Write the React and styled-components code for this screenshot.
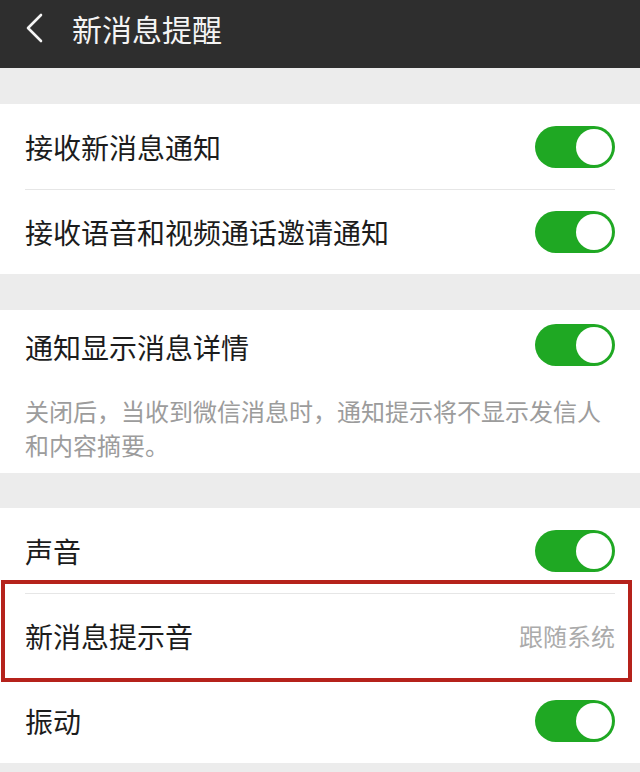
import React from "react";
import styled, { createGlobalStyle } from "styled-components";

const GlobalStyle = createGlobalStyle`
  html, body {
    margin: 0;
    padding: 0;
    background: #ececec;
  }
  body {
    font-family: "Noto Sans CJK SC", "Noto Sans", sans-serif;
    -webkit-font-smoothing: antialiased;
  }
`;

const Page = styled.div`
  width: 640px;
  height: 772px;
  overflow: hidden;
  background: #ececec;
  display: flex;
  flex-direction: column;
`;

const Header = styled.header`
  height: 68px;
  box-sizing: border-box;
  padding: 0 0 13px 25px;
  background: #2e2e2e;
  display: flex;
  align-items: center;
  gap: 29px;
  flex-shrink: 0;
`;

const BackIcon = styled.svg`
  width: 18px;
  height: 30px;
  display: block;
`;

const Title = styled.h1`
  margin: 0;
  font-size: 30px;
  font-weight: 400;
  color: #f4f4f4;
  line-height: 1;
  letter-spacing: 0;
`;

const Section = styled.section`
  background: #fff;
  margin-top: ${(p) => p.$gap}px;
  flex-shrink: 0;
`;

const Row = styled.div`
  position: relative;
  padding: 0 25px;
`;

const RowInner = styled.div`
  height: ${(p) => (p.$divider ? p.$h - 1 : p.$h)}px;
  border-top: ${(p) => (p.$divider ? "1px solid #e6e6e6" : "none")};
  display: flex;
  align-items: center;
  justify-content: space-between;
`;

const Label = styled.span`
  font-size: 28px;
  color: #1c1c1c;
  line-height: 1;
  padding-top: ${(p) => p.$shift || 0}px;
`;

const Value = styled.span`
  font-size: 24px;
  color: #ababab;
  line-height: 1;
`;

const Toggle = styled.div`
  width: 80px;
  height: 42px;
  border-radius: 21px;
  background: #1fa823;
  position: relative;
  flex-shrink: 0;
`;

const Knob = styled.div`
  position: absolute;
  top: 3px;
  right: 3px;
  width: 36px;
  height: 36px;
  border-radius: 50%;
  background: #fff;
`;

const Note = styled.p`
  margin: 0;
  padding: 14px 25px 11px;
  font-size: 24px;
  line-height: 34px;
  color: #9c9c9c;
`;

const Highlight = styled.div`
  position: absolute;
  top: -13px;
  bottom: -4px;
  left: 1px;
  right: 8px;
  border: 4px solid #b5221b;
  pointer-events: none;
`;

const Switch = () => (
  <Toggle>
    <Knob />
  </Toggle>
);

const Item = ({ label, divider, toggle, value, h = 85, highlight, shift }) => (
  <Row>
    <RowInner $divider={divider} $h={h}>
      <Label $shift={shift}>{label}</Label>
      {toggle && <Switch />}
      {value && <Value>{value}</Value>}
    </RowInner>
    {highlight && <Highlight />}
  </Row>
);

export default function App() {
  return (
    <>
      <GlobalStyle />
      <Page>
        <Header>
          <BackIcon viewBox="0 0 18 30">
            <path
              d="M16 2 L3 15 L16 28"
              fill="none"
              stroke="#f4f4f4"
              strokeWidth="2.6"
              strokeLinecap="round"
              strokeLinejoin="round"
            />
          </BackIcon>
          <Title>新消息提醒</Title>
        </Header>

        <Section $gap={36}>
          <Item label="接收新消息通知" toggle />
          <Item label="接收语音和视频通话邀请通知" toggle divider />
        </Section>

        <Section $gap={36}>
          <Item label="通知显示消息详情" toggle h={70} shift={4} />
          <Note>
            关闭后，当收到微信消息时，通知提示将不显示发信人和内容摘要。
          </Note>
        </Section>

        <Section $gap={35}>
          <Item label="声音" toggle />
          <Item label="新消息提示音" value="跟随系统" divider highlight />
          <Item label="振动" toggle />
        </Section>
      </Page>
    </>
  );
}
